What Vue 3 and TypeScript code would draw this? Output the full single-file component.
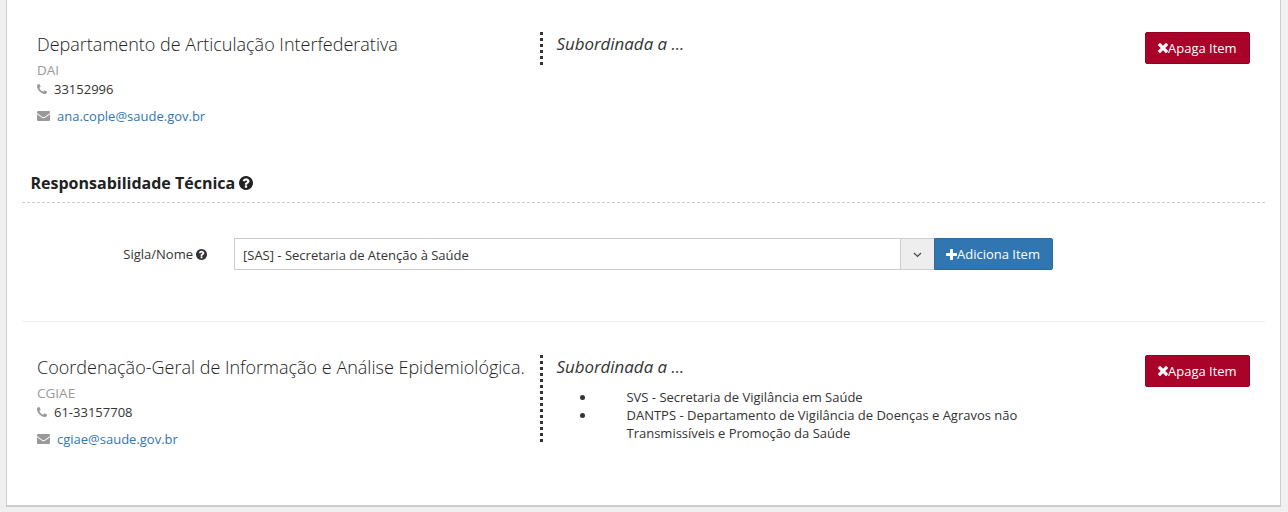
<script setup lang="ts">
interface Unit {
  name: string
  acronym: string
  phone: string
  email: string
  parents: string[]
}

const department: Unit = {
  name: 'Departamento de Articulação Interfederativa',
  acronym: 'DAI',
  phone: '33152996',
  email: 'ana.cople@saude.gov.br',
  parents: [],
}

const coordination: Unit = {
  name: 'Coordenação-Geral de Informação e Análise Epidemiológica.',
  acronym: 'CGIAE',
  phone: '61-33157708',
  email: 'cgiae@saude.gov.br',
  parents: [
    'SVS - Secretaria de Vigilância em Saúde',
    'DANTPS - Departamento de Vigilância de Doenças e Agravos não Transmissíveis e Promoção da Saúde',
  ],
}

const sections = [
  { unit: department, form: true },
  { unit: coordination, form: false },
]

const phonePath =
  'M1408 1240q0 27-10 70.5t-20.5 68.5q-21 50-122 106-94 51-186 51-27 0-53-3.5t-57.5-12.5-47-14.5-55.5-20.5-49-18q-98-35-175-83-127-79-264-216t-216-264q-48-77-83-175-3-9-18-49t-20.5-55.5-14.5-47-12.5-57.5-3.5-53q0-92 51-186 56-101 106-122 25-11 68.5-21t70.5-10q14 0 21 3 18 6 53 76 11 19 30 54t35 63.5 31 53.5q3 4 17.5 25t21.5 35.5 7 28.5q0 20-28.5 50t-62 55-62 53-28.5 46q0 9 5 22.5t8.5 20.5 14 24 11.5 19q76 137 174 235t235 174q2 1 19 11.5t24 14 20.5 8.5 22.5 5q18 0 46-28.5t53-62 55-62 50-28.5q14 0 28.5 7t35.5 21.5 25 17.5q25 15 53.5 31t63.5 35 54 30q70 35 76 53 3 7 3 21z'
const envelopePath =
  'M1792 710v794q0 66-47 113t-113 47h-1472q-66 0-113-47t-47-113v-794q44 49 101 87 362 246 497 345 57 42 92.5 65.5t94.5 48 110 24.5h2q51 0 110-24.5t94.5-48 92.5-65.5q170-123 498-345 57-39 100-87zm0-294q0 79-49 151t-122 123q-376 261-468 325-10 7-42.5 31t-54 38.5-52 32.5-57.5 27-50 9h-2q-23 0-50-9t-57.5-27-52-32.5-54-38.5-42.5-31q-91-64-262-182.5t-205-142.5q-62-42-117-115.5t-55-136.5q0-78 41.5-130t118.5-52h1472q65 0 112.5 47t47.5 113z'
const questionPath =
  'M1024 1376v-192q0-14-9-23t-23-9h-192q-14 0-23 9t-9 23v192q0 14 9 23t23 9h192q14 0 23-9t9-23zm256-672q0-88-55.5-163t-138.5-116-170-41q-243 0-371 213-15 24 8 42l132 100q7 6 19 6 16 0 25-12 53-68 86-92 34-24 86-24 48 0 85.5 26t37.5 59q0 38-20 61t-68 45q-63 28-115.5 86.5t-52.5 125.5v36q0 14 9 23t23 9h192q14 0 23-9t9-23q0-19 21.5-49.5t54.5-49.5q32-18 49-28.5t46-35 44.5-48 28-60.5 12.5-81zm384 192q0 209-103 385.5t-279.5 279.5-385.5 103-385.5-103-279.5-279.5-103-385.5 103-385.5 279.5-279.5 385.5-103 385.5 103 279.5 279.5 103 385.5z'
const timesPath =
  'M1490 1322q0 40-28 68l-136 136q-28 28-68 28t-68-28l-294-294-294 294q-28 28-68 28t-68-28l-136-136q-28-28-28-68t28-68l294-294-294-294q-28-28-28-68t28-68l136-136q28-28 68-28t68 28l294 294 294-294q28-28 68-28t68 28l136 136q28 28 28 68t-28 68l-294 294 294 294q28 28 28 68z'
const plusPath =
  'M1600 736v192q0 40-28 68t-68 28h-416v416q0 40-28 68t-68 28h-192q-40 0-68-28t-28-68v-416h-416q-40 0-68-28t-28-68v-192q0-40 28-68t68-28h416v-416q0-40 28-68t68-28h192q40 0 68 28t28 68v416h416q40 0 68 28t28 68z'
</script>

<template>
  <main class="page">
    <div class="panel">
      <template v-for="s in sections" :key="s.unit.acronym">
        <section class="unit">
          <div class="info">
            <h2 class="name">{{ s.unit.name }}</h2>
            <div class="acronym">{{ s.unit.acronym }}</div>
            <div class="phone">
              <svg class="phone-icon" viewBox="0 128 1408 1408"><path :d="phonePath" /></svg>
              <span>{{ s.unit.phone }}</span>
            </div>
            <div class="mail">
              <svg class="mail-icon" viewBox="0 256 1792 1408" preserveAspectRatio="none"><path :d="envelopePath" /></svg>
              <a class="link">{{ s.unit.email }}</a>
            </div>
          </div>
          <div class="parents">
            <div class="parents-title">Subordinada a ...</div>
            <ul v-if="s.unit.parents.length" class="list">
              <li v-for="p in s.unit.parents" :key="p" class="item">
                <span class="bullet"></span><span>{{ p }}</span>
              </li>
            </ul>
          </div>
          <button class="btn danger" type="button">
            <svg class="times-icon" viewBox="302 366 1188 1188"><path :d="timesPath" /></svg><span>Apaga Item</span>
          </button>
        </section>

        <section v-if="s.form" class="form">
          <h3 class="heading">
            <span class="heading-text">Responsabilidade Técnica</span>
            <svg class="help-big" viewBox="128 128 1536 1536"><path :d="questionPath" /></svg>
          </h3>
          <div class="field">
            <label class="label">
              <span class="label-text">Sigla/Nome</span>
              <svg class="help-small" viewBox="128 128 1536 1536"><path :d="questionPath" /></svg>
            </label>
            <div class="select">
              <span class="value">[SAS] - Secretaria de Atenção à Saúde</span>
              <span class="arrow">
                <svg class="chevron" viewBox="0 0 9 6"><path d="M1 1l3.5 3.5L8 1" /></svg>
              </span>
            </div>
            <button class="btn primary" type="button">
              <svg class="plus-icon" viewBox="192 128 1408 1408"><path :d="plusPath" /></svg><span>Adiciona Item</span>
            </button>
          </div>
        </section>
      </template>
    </div>
  </main>
</template>

<style>
html,
body {
  margin: 0;
  overflow: hidden;
  background: #f0f0f0;
}
</style>

<style scoped>
.page {
  box-sizing: border-box;
  width: 1288px;
  height: 512px;
  padding: 0 7px 5px 6px;
  background: #f0f0f0;
  color: #333;
  font: 13px/18px 'Open Sans', 'Noto Sans', sans-serif;
}
.page * {
  box-sizing: border-box;
}
svg {
  display: block;
  flex: none;
  fill: currentColor;
}
.panel {
  height: 507px;
  padding: 32px 15px 0;
  background: #fff;
  border: 1px solid #ccc;
  border-top: 0;
  border-bottom-width: 2px;
}
.unit {
  display: grid;
  grid-template-columns: 503px 1fr 105px;
  align-items: start;
  padding: 0 15px;
}
.info {
  height: 94px;
}
.name {
  margin: 0;
  height: 25px;
  color: #222;
  font-size: 18px;
  font-weight: 300;
  line-height: 25px;
  white-space: nowrap;
}
.acronym {
  height: 22px;
  padding-top: 4px;
  color: #999;
  font-size: 13.5px;
  line-height: 18px;
}
.phone {
  display: flex;
  height: 20px;
  padding-bottom: 1px;
  align-items: center;
}
.phone-icon {
  width: 10px;
  height: 10px;
  margin-right: 7px;
  color: #999;
}
.mail {
  display: flex;
  height: 18px;
  margin-top: 8px;
  align-items: center;
}
.mail-icon {
  width: 13px;
  height: 10px;
  margin-right: 7px;
  color: #999;
}
.link {
  color: #3276b1;
}
.parents {
  min-height: 33px;
  padding-left: 16.4px;
  background: repeating-linear-gradient(to bottom, #333 0 3px, transparent 3px 6px) 0 0 / 3px 100% no-repeat;
}
.parents-title {
  height: 33px;
  font-size: 16.9px;
  font-style: italic;
  line-height: 24px;
}
.list {
  width: 484px;
  margin: 0;
  padding: 0 0 0 23.6px;
  list-style: none;
}
.item {
  display: flex;
}
.bullet {
  flex: none;
  width: 5px;
  height: 5px;
  margin: 7px 41.5px 0 0;
  border-radius: 50%;
  background: #333;
}
.btn {
  display: flex;
  align-items: center;
  height: 32px;
  padding: 0 0 0 12px;
  border: 1px solid;
  border-radius: 2px;
  color: #fff;
  font: inherit;
  white-space: nowrap;
}
.danger {
  width: 105px;
  background: #a90329;
  border-color: #900323;
}
.primary {
  width: 119px;
  padding-left: 11px;
  border-radius: 0 2px 2px 0;
  background: #3276b1;
  border-color: #2c699d;
}
.times-icon {
  width: 10px;
  height: 10px;
}
.plus-icon {
  width: 11px;
  height: 11px;
}
.form {
  height: 196px;
  margin-bottom: 33px;
  border-bottom: 1px solid #eee;
}
.heading {
  display: flex;
  align-items: center;
  height: 77px;
  margin: 0;
  padding: 37px 0 0 8.5px;
  border-bottom: 1px dashed #ccc;
  color: #212121;
  font-size: 16px;
  font-weight: 700;
}
.help-big {
  width: 14px;
  height: 14px;
  margin-left: 3.5px;
}
.field {
  display: flex;
  padding-top: 35px;
}
.label {
  display: flex;
  justify-content: flex-end;
  align-items: center;
  width: 185px;
  height: 32px;
  margin-right: 27px;
}
.help-small {
  width: 11px;
  height: 11px;
  margin-left: 3px;
}
.select {
  display: flex;
  width: 700px;
  height: 32px;
  border: 1px solid #ccc;
  border-right: 0;
}
.value {
  flex: 1;
  padding: 7px 0 0 8px;
}
.arrow {
  display: flex;
  align-items: center;
  justify-content: center;
  width: 34px;
  border-left: 1px solid #ccc;
  background: #eee;
}
.chevron {
  width: 9px;
  height: 6px;
  margin-top: 2px;
  fill: none;
  stroke: #444;
  stroke-width: 1.2;
}
</style>
